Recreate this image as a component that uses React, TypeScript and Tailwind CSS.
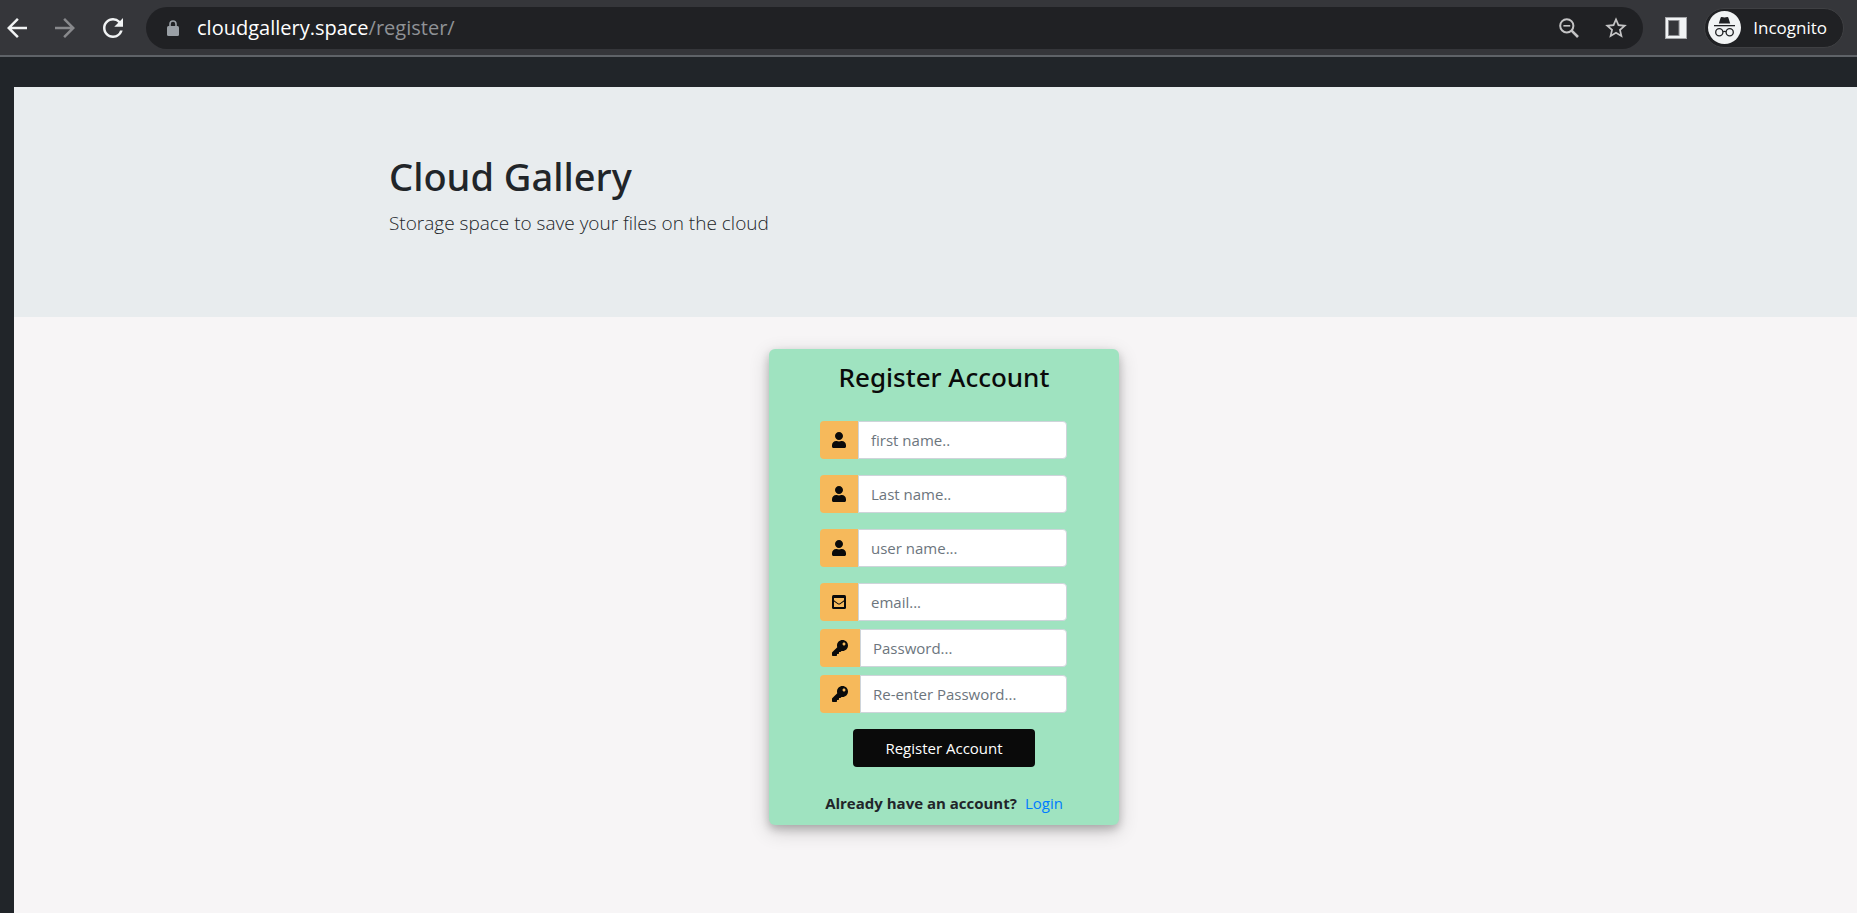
import type { ReactNode } from "react";
import { FaUser, FaKey } from "react-icons/fa";
import { MdArrowBack, MdArrowForward, MdRefresh, MdStarBorder } from "react-icons/md";

function LockIcon() {
  return (
    <svg width="12" height="16" viewBox="0 0 12 16" className="ml-[21px]" aria-hidden="true">
      <rect y="6" width="12" height="10" rx="1.5" fill="#9aa0a6" />
      <path d="M3 7V4a3 3 0 0 1 6 0v3" fill="none" stroke="#9aa0a6" strokeWidth="1.6" />
    </svg>
  );
}

function ZoomOutIcon() {
  return (
    <svg width="20" height="20" viewBox="0 0 20 20" fill="none" stroke="currentColor" aria-hidden="true">
      <circle cx="7.8" cy="7.8" r="6.6" strokeWidth="2" />
      <path d="m12.6 12.6 6.4 6.400" strokeWidth="2.6" />
      <path d="M4.400 7.8h6.800" strokeWidth="1.6" />
    </svg>
  );
}

function SidePanelIcon() {
  return (
    <svg width="22" height="22" viewBox="0 0 22 22" aria-hidden="true">
      <rect x="0.5" y="0.5" width="21" height="21" fill="#f1f3f4" stroke="#a5a6a9" />
      <rect x="3.5" y="3.5" width="10.5" height="15" fill="#35363a" stroke="#8b8c90" />
    </svg>
  );
}

function IncognitoIcon() {
  return (
    <svg width="33" height="33" viewBox="0 0 33 33" aria-hidden="true">
      <circle cx="16.5" cy="16.5" r="16.5" fill="#f1f3f4" />
      <path d="M10.8 12.4 12.7 6.600q.3-.8 1.100-.6l2.700.6 2.700-.6q.8-.2 1.100.6l1.900 5.800z" fill="#202124" />
      <path d="M6 14h21v1.300H6z" fill="#202124" />
      <g fill="none" stroke="#202124" strokeWidth="1.300">
        <circle cx="11.300" cy="21.300" r="3.600" />
        <circle cx="21.700" cy="21.300" r="3.600" />
        <path d="M15 20.800q1.500-1 3 0" />
      </g>
    </svg>
  );
}

function MailSquareIcon() {
  return (
    <svg width="14" height="14" viewBox="0 0 14 14" aria-hidden="true">
      <rect width="14" height="14" rx="1.500" fill="#0a0a0a" />
      <path d="M2 3h10v2.200L8 8.200q-1 .8-2 0L2 5.200z" fill="#f6b95b" />
      <path d="M2 6.400 5.500 9q1.500 1 3 0L12 6.400V12H2z" fill="#f6b95b" />
    </svg>
  );
}

function UserIcon() {
  return <FaUser className="h-4 w-[14px]" />;
}

type FieldProps = {
  id: string;
  label: string;
  type?: string;
  icon: ReactNode;
};

function Field({ id, label, type = "text", icon }: FieldProps) {
  return (
    <div className="flex h-[38px] w-full">
      <label htmlFor={id} aria-label={label} className="flex items-center rounded-l bg-[#f6b95b] px-3 text-[#0a0a0a]">
        {icon}
      </label>
      <input
        id={id}
        type={type}
        placeholder={label}
        className="min-w-0 flex-1 rounded-r border border-[#ced4da] bg-white px-3 text-[15px] text-[#495057] placeholder:text-[#6c757d]"
      />
    </div>
  );
}

function BrowserBar() {
  return (
    <div className="flex h-[57px] items-center border-b-2 border-[#5f6368] bg-[#35363a]">
      <div className="flex items-center gap-[18px] pl-[2px] text-[#f1f3f4]">
        <button type="button" aria-label="Back">
          <MdArrowBack size={30} />
        </button>
        <button type="button" aria-label="Forward" className="text-[#88898c]">
          <MdArrowForward size={30} />
        </button>
        <button type="button" aria-label="Reload">
          <MdRefresh size={30} />
        </button>
      </div>
      <div className="ml-[18px] flex h-[42px] flex-1 items-center rounded-full bg-[#202124] pr-[14px]">
        <LockIcon />
        <a href="#" className="ml-[18px] text-xl text-[#8f9296]">
          <span className="text-white">cloudgallery.space</span>/register/
        </a>
        <div className="ml-auto flex items-center gap-6 text-[#c4c4c5]">
          <button type="button" aria-label="Zoom">
            <ZoomOutIcon />
          </button>
          <button type="button" aria-label="Bookmark">
            <MdStarBorder size={26} />
          </button>
        </div>
      </div>
      <button type="button" aria-label="Side panel" className="ml-[22px]">
        <SidePanelIcon />
      </button>
      <button
        type="button"
        className="mr-[13px] ml-[17px] flex h-10 items-center gap-3 rounded-full border border-[#3f4043] bg-[#202124] pr-4 pl-[3px] text-[17px] text-white"
      >
        <IncognitoIcon />
        Incognito
      </button>
    </div>
  );
}

export default function App() {
  return (
    <div className="flex min-h-screen flex-col overflow-hidden bg-[#212529] font-['Open_Sans','Noto_Sans',sans-serif] text-[#212529]">
      <BrowserBar />
      <main className="-mr-[17px] ml-[14px] mt-[30px] flex-1 bg-[#f7f5f6]">
        <header className="bg-[#e8ecee] pt-[65px] pb-[63px]">
          <div className="mx-auto max-w-[1140px] px-[15px]">
            <h1 className="mb-2 font-['Noto_Sans','Open_Sans',sans-serif] text-[38px] leading-[48px] font-medium">
              Cloud Gallery
            </h1>
            <p className="mb-4 text-[19px] leading-[30px] font-light">Storage space to save your files on the cloud</p>
          </div>
        </header>
        <section className="mx-auto mt-8 flex w-[350px] flex-col items-center rounded-md bg-[#9fe3c0] pt-[11px] pb-[10px] shadow-[0_4px_8px_0_rgba(0,0,0,0.2),0_6px_20px_0_rgba(0,0,0,0.19)]">
          <h2 className="font-['Noto_Sans','Open_Sans',sans-serif] text-[26px] leading-[34px] font-medium text-[#0a0a0a]">
            Register Account
          </h2>
          <form className="mt-[27px] flex w-[248px] flex-col items-center" onSubmit={(e) => e.preventDefault()}>
            <div className="flex w-full flex-col gap-4 pr-px">
              <Field id="first-name" label="first name.." icon={<UserIcon />} />
              <Field id="last-name" label="Last name.." icon={<UserIcon />} />
              <Field id="user-name" label="user name..." icon={<UserIcon />} />
              <Field id="email" label="email..." type="email" icon={<MailSquareIcon />} />
            </div>
            <div className="mt-2 flex w-full flex-col gap-2 pr-px">
              <Field id="password" label="Password..." type="password" icon={<FaKey size={16} />} />
              <Field id="confirm" label="Re-enter Password..." type="password" icon={<FaKey size={16} />} />
            </div>
            <button type="submit" className="mt-4 h-[38px] w-[182px] rounded bg-[#0a0a0a] text-[15px] text-white">
              Register Account
            </button>
          </form>
          <p className="mt-6 text-[15px] leading-6">
            <span className="font-bold">Already have an account?</span>
            <a href="#" className="ml-2 text-[#007bff]">
              Login
            </a>
          </p>
        </section>
      </main>
    </div>
  );
}
